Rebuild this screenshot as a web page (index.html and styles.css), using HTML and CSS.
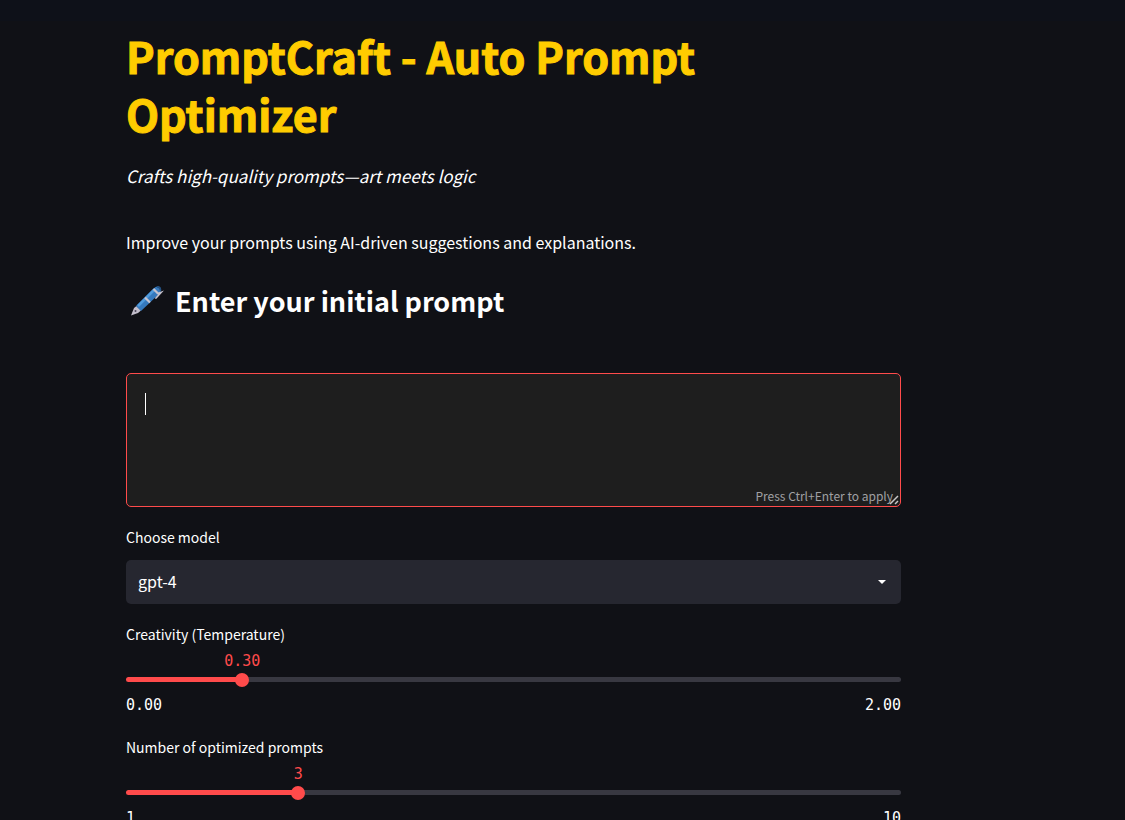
FILE: index.html
```html
<!DOCTYPE html>
<html lang="en">
<head>
<meta charset="utf-8">
<meta name="viewport" content="width=device-width, initial-scale=1">
<title>PromptCraft</title>
<link rel="stylesheet" href="styles.css">
</head>
<body class="app">
<header class="topbar"></header>
<main class="content">
  <h1 class="title">PromptCraft - Auto Prompt Optimizer</h1>
  <p class="tagline">Crafts high-quality prompts—art meets logic</p>
  <p class="intro">Improve your prompts using AI-driven suggestions and explanations.</p>
  <h2 class="heading">
    <svg class="pen" viewBox="0 0 40 36" aria-hidden="true">
      <path d="M5 32.500 L8 25 L10.500 23 L15 27.500 L12 30 Z" fill="#c3becb"/>
      <path d="M10 23 L27 6 Q31 2 34 4 Q36.500 7 33 11 L15 28 Z" fill="#3579bd"/>
      <path d="M12 23 L29 6" stroke="#4f9bdc" stroke-width="2.500"/>
      <path d="M19 14.500 L24 19.500 M27.500 6 L32 10.500" stroke="#c5c2ce" stroke-width="2.200"/>
      <path d="M32 10.500 L35 9.500 L30 15" fill="none" stroke="#c5c2ce" stroke-width="1.800" stroke-linecap="round"/>
      <path d="M31 3.800 Q34.500 4 34.500 7.500" fill="none" stroke="#234f80" stroke-width="1.800"/>
      <circle cx="9.500" cy="28" r="1" fill="#4b4658"/>
    </svg>
    <span>Enter your initial prompt</span>
  </h2>
  <div class="editor">
    <textarea class="editor-input" aria-label="Enter your initial prompt"></textarea>
    <span class="caret"></span>
    <span class="hint">Press Ctrl+Enter to apply</span>
    <svg class="grip" viewBox="0 0 10 10" aria-hidden="true"><path d="M1 9L9 1M6 9l3-3" stroke="#c8c8c8" stroke-width="1.500"/></svg>
  </div>
  <div class="field">
    <label class="label" for="model">Choose model</label>
    <div class="select-box">
      <select class="select" id="model"><option>gpt-4</option></select>
      <svg class="arrow" viewBox="0 0 10 6" aria-hidden="true"><path d="M1 1h8L5 5z" fill="#fff"/></svg>
    </div>
  </div>
  <div class="field">
    <label class="label" for="temp">Creativity (Temperature)</label>
    <div class="slider" style="--pos:15%">
      <output class="value" for="temp">0.30</output>
      <div class="track"><input class="range" id="temp" type="range" min="0" max="2" step="0.01" value="0.3"></div>
      <div class="limits"><span>0.00</span><span>2.00</span></div>
    </div>
  </div>
  <div class="field">
    <label class="label" for="count">Number of optimized prompts</label>
    <div class="slider" style="--pos:22.222%">
      <output class="value" for="count">3</output>
      <div class="track"><input class="range" id="count" type="range" min="1" max="10" value="3"></div>
      <div class="limits"><span>1</span><span>10</span></div>
    </div>
  </div>
</main>
</body>
</html>
```
FILE: styles.css
```css
* { box-sizing: border-box; }
.app {
  margin: 0;
  height: 100vh;
  overflow: hidden;
  background: #101116;
  color: #fff;
  font-family: "Noto Sans CJK SC", "Noto Sans", sans-serif;
  font-size: 16px;
  line-height: 28px;
}
.topbar { height: 21px; background: #0e1119; }
.content { margin: 0 224px 0 126px; padding-top: 5px; }
.title {
  margin: 0;
  max-width: 640px;
  color: #ffcc00;
  font-size: 43px;
  font-weight: 700;
  line-height: 58px;
  -webkit-text-stroke: 1px #ffcc00;
}
.tagline { margin: 19px 0 0; font-size: 17px; line-height: 30px; font-style: italic; }
.intro { margin: 37px 0 0; }
.heading {
  display: flex;
  align-items: center;
  gap: 9px;
  margin: 26px 0 0;
  font-size: 27px;
  font-weight: 600;
  line-height: 38px;
}
.pen { width: 40px; height: 36px; }
.editor { position: relative; margin-top: 53px; height: 134px; }
.editor-input {
  display: block;
  width: 100%;
  height: 100%;
  padding: 18px;
  border: 1px solid #ff4b4b;
  border-radius: 5px;
  outline: none;
  background: #1e1e1e;
  color: #fff;
  font: inherit;
  resize: vertical;
}
.editor-input::-webkit-resizer { background: transparent; }
.caret { position: absolute; left: 19px; top: 20px; width: 1px; height: 22px; background: #fff; }
.hint { position: absolute; right: 8px; bottom: 1px; font-size: 12px; line-height: 20px; color: #a0a0a3; pointer-events: none; }
.grip { position: absolute; right: 2px; bottom: 2px; width: 10px; height: 10px; pointer-events: none; }
.field { margin-top: 18px; }
.label { display: block; font-size: 14px; line-height: 24px; }
.select-box { position: relative; margin-top: 11px; }
.select {
  display: block;
  width: 100%;
  height: 44px;
  padding: 0 12px 2px;
  border: 0;
  border-radius: 5px;
  appearance: none;
  background: #262730;
  color: #fff;
  font: inherit;
}
.arrow { position: absolute; right: 14px; top: 19px; width: 10px; height: 6px; }
.slider { padding-top: 3px; font-family: "DejaVu Sans Mono", monospace; font-size: 15px; line-height: 24px; }
.value { display: block; width: max-content; margin-left: var(--pos); transform: translateX(-50%); color: #ff4b4b; }
.track {
  display: flex;
  align-items: center;
  height: 5px;
  margin: 4px 0 11px;
  border-radius: 3px;
  background: linear-gradient(90deg, #ff4b4b var(--pos), #383841 var(--pos));
}
.range {
  flex: none;
  width: calc(100% + 14px);
  height: 14px;
  margin: 0 -7px;
  appearance: none;
  background: transparent;
}
.range::-webkit-slider-thumb { appearance: none; width: 14px; height: 14px; border-radius: 50%; background: #ff4b4b; }
.limits { display: flex; justify-content: space-between; }
```
